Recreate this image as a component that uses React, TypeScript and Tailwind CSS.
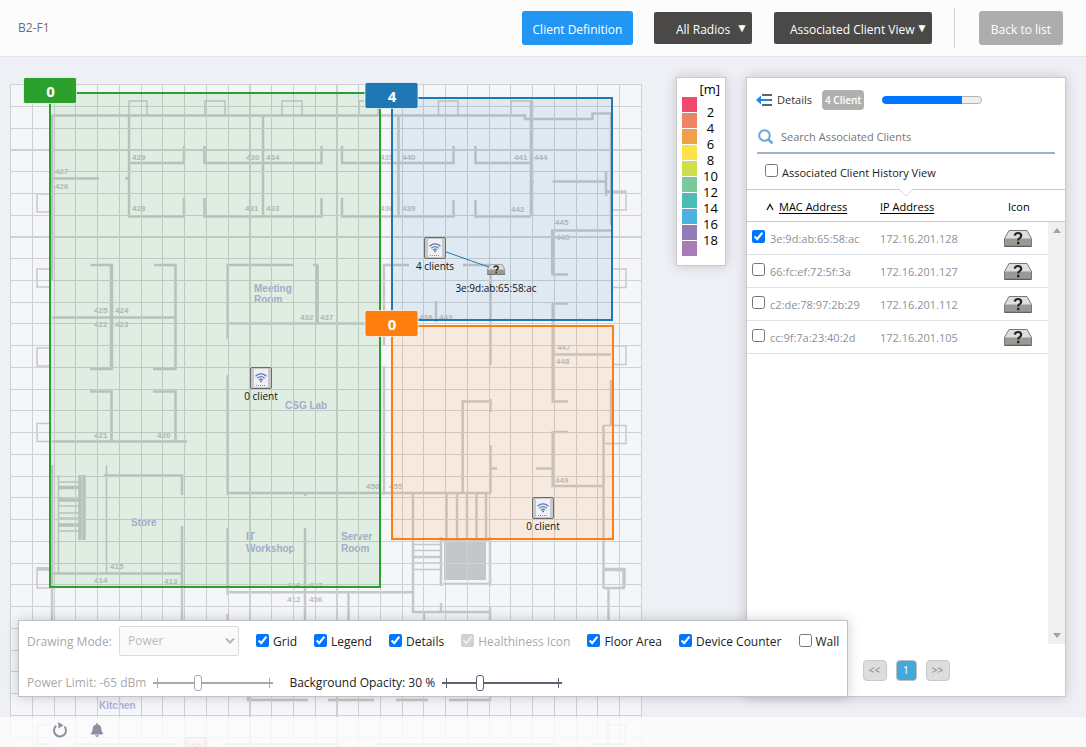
import { useState } from 'react';
import { FaBell } from 'react-icons/fa';

const legendColors = [
  'bg-[#ef4b6e]',
  'bg-[#ee8467]',
  'bg-[#f29f4c]',
  'bg-[#fee24a]',
  'bg-[#cddf4b]',
  'bg-[#79ca98]',
  'bg-[#4bbdb5]',
  'bg-[#4ab1e2]',
  'bg-[#927bb6]',
  'bg-[#a87cb6]',
];

const legendLabels = [2, 4, 6, 8, 10, 12, 14, 16, 18];

const clients = [
  { mac: '3e:9d:ab:65:58:ac', ip: '172.16.201.128' },
  { mac: '66:fc:ef:72:5f:3a', ip: '172.16.201.127' },
  { mac: 'c2:de:78:97:2b:29', ip: '172.16.201.112' },
  { mac: 'cc:9f:7a:23:40:2d', ip: '172.16.201.105' },
];

const options = [
  { label: 'Grid', checked: true },
  { label: 'Legend', checked: true },
  { label: 'Details', checked: true },
  { label: 'Healthiness Icon', checked: true, disabled: true },
  { label: 'Floor Area', checked: true },
  { label: 'Device Counter', checked: true },
  { label: 'Wall', checked: false },
];

const GRID = 21.7586;
const gridX = [...Array(30)].map((_, i) => Math.floor(10.5 + i * GRID));
const gridY = [...Array(31)].map((_, i) => Math.floor(84.5 + i * GRID));
const boldX = [249, 336];
const boldY = [149, 236, 649];

// Thin outlines: window bays and light partitions
const thinWalls = `
  M129 115V101H147V115 M205 115V101H225V115 M282 115V101H302V115 M359 115V101H378V115
  M438.5 115V101H458V115 M511 115V101H531V115
  M50 194H37V212H50 M50 269H37V287H50 M50 348H37V366H50 M50 423.5H37V441.5H50 M50 568H37V588H50
  M612 192H626V210H612 M612 269H626V287.5H612 M612 346H626V364.5H612 M603.5 425.5H626V443.5H603.5
  M58.5 475V573 M106.5 465V573 M58 482H80 M58 506H80 M58 513H80 M58 518H80 M58 531H80
  M414 550.5H441 M414 563H441 M414 544.5H441 M414 569.5H441 M443 583.5H490
  M37 744H50 M50 725H37V744 M608 720V745 M608 725H625V745 M74 744H178 M223 744H338 M376 744H557 M592 744H625`;

// Room walls
const walls = `
  M52 115.5H525V119H592.5V113.5H611V225 M52 115V281
  M129 115V216.5H184V198 M129 163H184V146 M52 178.5H99 M125 178.5H129
  M204.5 146V163H321.5V146 M204.5 198V216.5H321.5V198 M263 116V216
  M342 146V163H453.5V146 M342 198V216.5H453.5V200 M398.5 116V216
  M475.5 146V163H531 M475.5 200V216.5H531 M532 181.5H534 M552.5 181.5H606V172V196
  M611 230.5H552.7V274.5H568
  M90.5 265H111.5V369H90 M154 265H175.5V369H153 M52 317.5H176
  M90 391.5H111.5V441 M153 391.5H175.5V441 M52 441.5H187
  M227.7 339V265H293 M313 265H317V323 M228 323.5H392 M227.7 375V495 M305.5 493V496
  M104 475.5H182V495 M52 465V620 M52 573.5H182 M182 526V620
  M228 493H491 M227.7 528V595 M305 528V620 M228 592.3H412 M348.5 592V620
  M409 265H384V346 M384 366V495 M463 265H490.5V365 M436 301V322
  M568 303.5H552.7V401.5H568 M553 354.5H611 M611 380V425
  M490 401.5H462.7V493 M490.5 399V412 M490.5 445V493 M490 468.5H497 M536 468.5H553
  M568 432H552.7V486H603 M603.5 425V588
  M413 493V612H490 M446.5 493V540 M457 493V540 M467 493V540 M476.5 493V540 M486 493V540
  M441 537V586 M490 537V586 M414 557H441 M441 603V612 M490 606V620 M424 612V620
  M608.5 588V620 M603 588H625
  M248 697V700H308 M328 700H374 M396 700H428 M449 700H490V697 M227.7 614V620`;

// Heavier structural parts
const thickWalls = `
  M531.5 101V216 M317 265V323 M80 475V540 M84 475V540 M58 487.5H80 M58 500H80 M58 525H80
  M606 192H626 M603.5 569.5H624V587 M37 569H50 M552.7 230V274 M441 540H490 M111.5 265V369`;

const roomNumbers: [string, number, number][] = [
  ['429', 132, 160], ['428', 132, 211], ['427', 55, 174], ['426', 55, 189],
  ['430', 246, 160], ['434', 266, 160], ['431', 245, 211], ['433', 266, 211],
  ['435', 380, 160], ['440', 402, 160], ['436', 380, 211], ['439', 402, 211],
  ['441', 514, 160], ['444', 534, 160], ['442', 511, 212], ['445', 555, 225],
  ['446', 556, 240], ['425', 94, 313], ['424', 115, 313], ['422', 94, 327],
  ['423', 115, 327], ['421', 94, 438], ['420', 157, 438], ['432', 300, 320],
  ['437', 320, 320], ['415', 110, 569], ['414', 94, 583], ['413', 164, 584],
  ['416', 287, 588], ['417', 309, 588], ['412', 287, 602], ['456', 309, 602],
  ['438', 419, 320], ['443', 439, 320], ['450', 366, 489], ['455', 389, 489],
  ['447', 557, 350], ['448', 556, 364], ['449', 555, 483],
];

const roomNames: [string, number, number][] = [
  ['Meeting', 254, 292], ['Room', 254, 303], ['CSG Lab', 285, 409], ['Store', 131, 526],
  ['IT', 246, 540], ['Workshop', 246, 552], ['Server', 341, 540], ['Room', 341, 552],
  ['Kitchen', 99, 709],
];

const ClientIcon = ({ className }: { className?: string }) => (
  <svg viewBox="0 0 28 17" className={className} width="28" height="17">
    <path d="M5 .5H23L27.5 8.5V16.5H.5V8.5Z" fill="#dededd" />
    <path d="M.5 8.5H27.5V16.5H.5Z" fill="#999a96" />
    <path d="M5 .5H23L27.5 8.5V16H.5V8.5Z" fill="none" stroke="#777875" />
    <path d="M.5 16.5H27.5" stroke="#5f605d" />
    <path
      d="M10.8 5.6Q11 3 14 3Q17.2 3 17.2 5.7Q17.2 7.1 15.6 8.1Q14.2 8.9 14.2 10.4"
      fill="none"
      stroke="#252525"
      strokeWidth="2.2"
    />
    <rect x="13" y="11.8" width="2.4" height="2.4" fill="#252525" />
  </svg>
);

const AccessPoint = ({ x, y, label, alert }: { x: number; y: number; label?: string; alert?: boolean }) => (
  <g transform={`translate(${x} ${y})`}>
    <rect x="-10.5" y="-10.5" width="21" height="21" rx="1.5" fill="#c9c9ca" stroke={alert ? '#d08088' : '#6b6b6d'} />
    <rect x="-7" y="-9" width="14" height="18" rx="1" fill={alert ? '#f8dfe0' : '#eff0f4'} />
    <g fill="none" stroke={alert ? '#d05560' : '#5b79b8'} strokeWidth="1.3">
      <path d="M-5.5 -1.8Q0 -6.4 5.5 -1.8" />
      <path d="M-3.7 .2Q0 -2.9 3.7 .2" />
      <path d="M-2 2Q0 .4 2 2" />
    </g>
    <circle cy="3.2" r="1" fill={alert ? '#d05560' : '#5b79b8'} />
    <path d="M-5 7.5H5" stroke="#8b8c90" strokeDasharray="1 1" />
    {label && (
      <text y="22" textAnchor="middle" fontSize="10" fill="#111">
        {label}
      </text>
    )}
  </g>
);

const Zone = ({ x, y, w, h, color }: { x: number; y: number; w: number; h: number; color: string }) => (
  <rect x={x} y={y} width={w} height={h} fill={color} fillOpacity="0.1" stroke={color} strokeWidth="2" />
);

const ZoneBadge = ({ x, y, count, color }: { x: number; y: number; count: number; color: string }) => (
  <g>
    <rect x={x} y={y} width="53" height="26" rx="2" fill={color} stroke="#fff" strokeOpacity="0.7" />
    <text x={x + 27} y={y + 19} textAnchor="middle" fontSize="15" fontWeight="700" fill="#fff">
      {count}
    </text>
  </g>
);

const FloorMap = () => (
  <svg
    viewBox="10 84 632 663"
    className="mt-[27px] ml-2.5 h-[663px] w-[632px] shrink-0 overflow-visible"
    role="img"
    aria-label="Floor map"
  >
    <rect x="10" y="84" width="632" height="663" fill="#f5f6f9" />

    <g fill="none" stroke="#c6c7ca">
      <path d={thinWalls} strokeWidth="1.5" />
      <path d={walls} strokeWidth="2.5" />
      <path d={thickWalls} strokeWidth="3.5" />
    </g>
    <rect x="444" y="541" width="42" height="39" fill="#c5c6c8" />
    <g fontFamily="Liberation Sans, sans-serif" fontSize="8" fontWeight="700" fill="#bcbdc1">
      {roomNumbers.map(([text, x, y]) => (
        <text key={text} x={x} y={y}>{text}</text>
      ))}
    </g>
    <g fontFamily="Liberation Sans, sans-serif" fontSize="10" fontWeight="700" fill="#aeb0d8">
      {roomNames.map(([text, x, y]) => (
        <text key={`${text}-${x}`} x={x} y={y}>{text}</text>
      ))}
    </g>

    <g fill="#cfd0d1">
      {gridX.map((x) => (
        <rect key={x} x={x} y="84" width={boldX.includes(x) ? 2 : 1} height="663" />
      ))}
      {gridY.map((y) => (
        <rect key={y} x="10" y={y} width="632" height={boldY.includes(y) ? 2 : 1} />
      ))}
    </g>

    <Zone x={50} y={93} w={330} h={494} color="#2ca02c" />
    <Zone x={392} y={98} w={220} h={222} color="#1f77b4" />
    <Zone x={392} y={326} w={221} h={213} color="#ff7f0e" />
    <ZoneBadge x={23.5} y={77.5} count={0} color="#2ca02c" />
    <ZoneBadge x={365} y={82.5} count={4} color="#1f77b4" />
    <ZoneBadge x={365} y={310.5} count={0} color="#ff7f0e" />

    <path d="M435 248L497 270" stroke="#1f77b4" />
    <AccessPoint x={261} y={378} label="0 client" />
    <AccessPoint x={435} y={248} label="4 clients" />
    <AccessPoint x={543} y={508} label="0 client" />
    <AccessPoint x={196} y={748} alert />
    <g transform="translate(487 264) scale(0.65)">
      <ClientIcon />
    </g>
    <text x="496" y="292" textAnchor="middle" fontSize="10" fill="#111">
      3e:9d:ab:65:58:ac
    </text>
  </svg>
);

const Legend = () => (
  <aside className="mt-5 ml-[34px] h-[189px] w-[50px] shrink-0 border border-[#c8c9cc] bg-white px-[5px] pt-[3px] text-[13px] leading-4 shadow-[0_0_12px_rgba(0,0,0,0.18)]">
    <p className="text-right">[m]</p>
    <div className="flex">
      <div className="flex w-[15px] flex-col gap-px">
        {legendColors.map((color) => (
          <span key={color} className={`h-[15px] ${color}`} />
        ))}
      </div>
      <div className="flex-1 pt-[7px] pl-1 text-center">
        {legendLabels.map((n) => (
          <p key={n}>{n}</p>
        ))}
      </div>
    </div>
  </aside>
);

const DetailsPanel = () => {
  const [selected, setSelected] = useState<string[]>([clients[0].mac]);

  const toggle = (mac: string) => {
    setSelected((prev) => (prev.includes(mac) ? prev.filter((m) => m !== mac) : [...prev, mac]));
  };

  return (
    <section className="mt-5 mr-5 mb-[50px] ml-5 flex min-w-0 flex-1 flex-col border border-[#c8c9cc] bg-white pt-3 text-[11px] leading-4 shadow-[0_0_12px_rgba(0,0,0,0.18)]">
      <div className="flex h-5 items-center pl-[9px]">
        <svg viewBox="0 0 16 14" className="mr-[5px] h-3.5 w-4" fill="none" strokeWidth="2">
          <path d="M6 2H16M6 12H16M9 7H16" stroke="#5d6472" />
          <path d="M3 7H14" stroke="#1e88f0" />
          <path d="M5 2.5V11.5L0 7Z" fill="#1e88f0" />
        </svg>
        <h2 className="text-[#333]">Details</h2>
        <span className="ml-2.5 rounded-sm bg-[#b0b0b0] px-[3px] text-[10px] leading-5 font-semibold text-white">4 Client</span>
        <progress
          className="ml-[18px] h-2 w-[100px] appearance-none overflow-hidden rounded-full [&::-webkit-progress-bar]:rounded-full [&::-webkit-progress-bar]:bg-[#efefef] [&::-webkit-progress-bar]:shadow-[inset_0_0_0_1px_#b5b5b5] [&::-webkit-progress-value]:rounded-l-full [&::-webkit-progress-value]:bg-[#0075ff]"
          value={80}
          max={100}
          aria-label="Loading clients"
        />
      </div>

      <div className="mx-2.5 mt-3 flex h-8 items-center border-b-2 border-[#9fb3c6]">
        <svg viewBox="0 0 16 16" className="mx-px h-4 w-4 shrink-0" fill="none" stroke="#6fa5dc" strokeWidth="2">
          <circle cx="6.5" cy="6.5" r="5.3" />
          <path d="M10.5 10.5L14.5 14.5" strokeWidth="2.5" />
        </svg>
        <input
          type="text"
          aria-label="Search Associated Clients"
          placeholder="Search Associated Clients"
          className="ml-1.5 min-w-0 flex-1 outline-none placeholder:text-[#757575]"
        />
      </div>

      <div className="relative h-9 border-b border-[#c8c9cc] pl-[18px]">
        <label className="flex h-9 items-center gap-1 pt-0.5 text-[#222]">
          <input type="checkbox" className="mb-1.5 size-[13px]" />
          Associated Client History View
        </label>
        <svg viewBox="0 0 16 8" className="absolute top-[35px] left-[151px] h-2 w-4">
          <path d="M1 0L8 7L15 0" fill="#fff" stroke="#d5d6d8" />
        </svg>
      </div>

      <div className="relative flex-1">
        <table className="w-full table-fixed border-separate border-spacing-0">
          <thead>
            <tr className="h-8 text-left text-black">
              <th className="w-[133px] border-b border-[#c8c9cc] p-0 pt-[3px] pl-[19px] font-normal">
                <button type="button" className="flex items-center gap-[5px]">
                  <svg viewBox="0 0 8 8" className="h-2 w-2" fill="none" stroke="#222" strokeWidth="1.4">
                    <path d="M1 7L4 1.5L7 7" />
                  </svg>
                  <span className="underline underline-offset-2">MAC Address</span>
                </button>
              </th>
              <th className="w-[124px] border-b border-[#c8c9cc] p-0 pt-[3px] font-normal">
                <button type="button" className="underline underline-offset-2">IP Address</button>
              </th>
              <th className="border-b border-[#c8c9cc] p-0 pt-[3px] pl-1 font-normal">Icon</th>
            </tr>
          </thead>
          <tbody className="text-[#8e9099]">
            {clients.map(({ mac, ip }) => (
              <tr key={mac} className="h-[33px]">
                <td className="border-b border-[#dfe3e8] p-0 pl-[5px]">
                  <label className="flex items-center gap-[5px] pt-0.5">
                    <input
                      type="checkbox"
                      className="mb-1.5 size-[13px]"
                      checked={selected.includes(mac)}
                      onChange={() => toggle(mac)}
                    />
                    {mac}
                  </label>
                </td>
                <td className="border-b border-[#dfe3e8] p-0 pt-0.5">{ip}</td>
                <td className="border-b border-[#dfe3e8] p-0">
                  <ClientIcon />
                </td>
              </tr>
            ))}
          </tbody>
        </table>
        <div className="absolute top-8 right-0 bottom-0 flex w-[17px] flex-col items-center justify-between bg-[#f0f0f0] py-1.5">
          <svg viewBox="0 0 8 5" className="h-[5px] w-2">
            <path d="M0 5L4 0L8 5Z" fill="#a3a3a3" />
          </svg>
          <svg viewBox="0 0 8 5" className="h-[5px] w-2">
            <path d="M0 0L4 5L8 0Z" fill="#a3a3a3" />
          </svg>
        </div>
      </div>

      <nav className="flex h-[52px] items-center justify-center gap-[9px]" aria-label="Pages">
        <button type="button" className="h-[21px] w-6 rounded-sm border border-[#c9c9c9] bg-[#dddddd] text-[10px] text-[#808080]">&lt;&lt;</button>
        <button type="button" className="h-[21px] w-[21px] rounded-sm border border-[#c0c0c0] bg-[#43a8dc] text-white">1</button>
        <button type="button" className="h-[21px] w-6 rounded-sm border border-[#c9c9c9] bg-[#dddddd] text-[10px] text-[#808080]">&gt;&gt;</button>
      </nav>
    </section>
  );
};

const Slider = ({ value, disabled, label }: { value: number; disabled?: boolean; label: string }) => (
  <input
    type="range"
    aria-label={label}
    defaultValue={value}
    disabled={disabled}
    className="h-4 w-[120px] appearance-none text-[#5d6170] [background:linear-gradient(currentColor,currentColor)_0_50%/100%_2px_no-repeat,linear-gradient(currentColor,currentColor)_4px_50%/1px_10px_no-repeat,linear-gradient(currentColor,currentColor)_116px_50%/1px_10px_no-repeat] disabled:text-[#a9a9a9] [&::-webkit-slider-thumb]:h-4 [&::-webkit-slider-thumb]:w-2 [&::-webkit-slider-thumb]:appearance-none [&::-webkit-slider-thumb]:rounded-[3px] [&::-webkit-slider-thumb]:border [&::-webkit-slider-thumb]:border-current [&::-webkit-slider-thumb]:bg-white"
  />
);

const ControlBar = () => (
  <section className="absolute bottom-[50px] left-[18px] border border-[#bfc3c8] bg-white px-2 pt-[5px] pb-px text-[12px] text-[#222] shadow-[0_0_12px_rgba(0,0,0,0.2)]">
    <div className="flex items-center gap-[17px]">
      <div className="flex items-center gap-1 text-[#a9a9a9]">
        <label htmlFor="mode" className="w-22 pt-0.5">Drawing Mode:</label>
        <div className="relative">
          <select
            id="mode"
            disabled
            className="block h-[30px] w-[120px] appearance-none rounded-xs border border-[#dcdcdc] bg-[#fafafa] pl-2 text-[#bbbbbb]"
          >
            <option>Power</option>
          </select>
          <svg viewBox="0 0 10 6" className="pointer-events-none absolute top-3 right-1 h-1.5 w-2.5" fill="none" stroke="#b5b5b5" strokeWidth="2">
            <path d="M1 .5L5 4.5L9 .5" />
          </svg>
        </div>
      </div>
      {options.map(({ label, checked, disabled }) => (
        <label key={label} className={`flex items-center gap-1 pt-0.5 whitespace-nowrap ${disabled ? 'text-[#a9a9a9]' : ''}`}>
          <input type="checkbox" defaultChecked={checked} disabled={disabled} className="mb-1 size-[13px]" />
          {label}
        </label>
      ))}
    </div>
    <div className="mt-[13px] flex h-[26px] items-center gap-4 pt-0.5">
      <div className="flex items-center gap-[7px] text-[#a9a9a9]">
        <span>Power Limit: -65 dBm</span>
        <Slider label="Power Limit" value={36} disabled />
      </div>
      <div className="flex items-center gap-[7px]">
        <span>Background Opacity: 30 %</span>
        <Slider label="Background Opacity" value={30} />
      </div>
    </div>
  </section>
);

export default function App() {
  return (
    <div className="relative flex h-screen flex-col overflow-hidden bg-[#eff0f5] font-['Open_Sans','Noto_Sans',sans-serif] text-black">
      <header className="flex h-[57px] shrink-0 items-center border-b border-[#e4e4e7] bg-[#fcfcfc] pr-[23px] pl-[18px] text-[12px] text-white">
        <h1 className="mr-auto text-[#6b6d7c]">B2-F1</h1>
        <button type="button" className="h-[34px] w-[111px] rounded-[3px] bg-[#2196f3] pt-[3px]">Client Definition</button>
        <div className="relative ml-[21px]">
          <select aria-label="Radios" className="block h-8 w-[98px] appearance-none rounded-xs bg-[#4a4947] pt-[3px] pl-[22px]">
            <option>All Radios</option>
          </select>
          <span className="pointer-events-none absolute top-[7px] right-1">▼</span>
        </div>
        <div className="relative ml-[22px]">
          <select aria-label="View" className="block h-8 w-[158px] appearance-none rounded-xs bg-[#4a4947] pt-[3px] pl-4">
            <option>Associated Client View</option>
          </select>
          <span className="pointer-events-none absolute top-[7px] right-1">▼</span>
        </div>
        <div className="ml-[22px] h-10 w-px bg-[#d4d4d8]" />
        <button type="button" className="ml-6 h-[34px] w-[84px] rounded-[3px] bg-[#adadad] pt-[3px]">Back to list</button>
      </header>

      <main className="relative flex min-h-0 flex-1">
        <FloorMap />
        <Legend />
        <DetailsPanel />
        <ControlBar />
      </main>

      <footer className="absolute inset-x-0 bottom-0 flex h-[30px] items-center gap-[22px] bg-[#fcfcfc]/85 pb-1 pl-[52px] text-[#8b8fa6]">
        <button type="button" aria-label="Refresh">
          <svg viewBox="0 0 16 16" className="h-4 w-4" fill="none" stroke="currentColor" strokeWidth="2">
            <path d="M4.2 3.8A6 6 0 1 0 12.6 4.6" />
            <path d="M6 0L11.5 3.2L6.5 6.6Z" fill="currentColor" stroke="none" />
          </svg>
        </button>
        <button type="button" aria-label="Notifications">
          <FaBell className="h-3.5 w-3.5" />
        </button>
      </footer>
    </div>
  );
}
